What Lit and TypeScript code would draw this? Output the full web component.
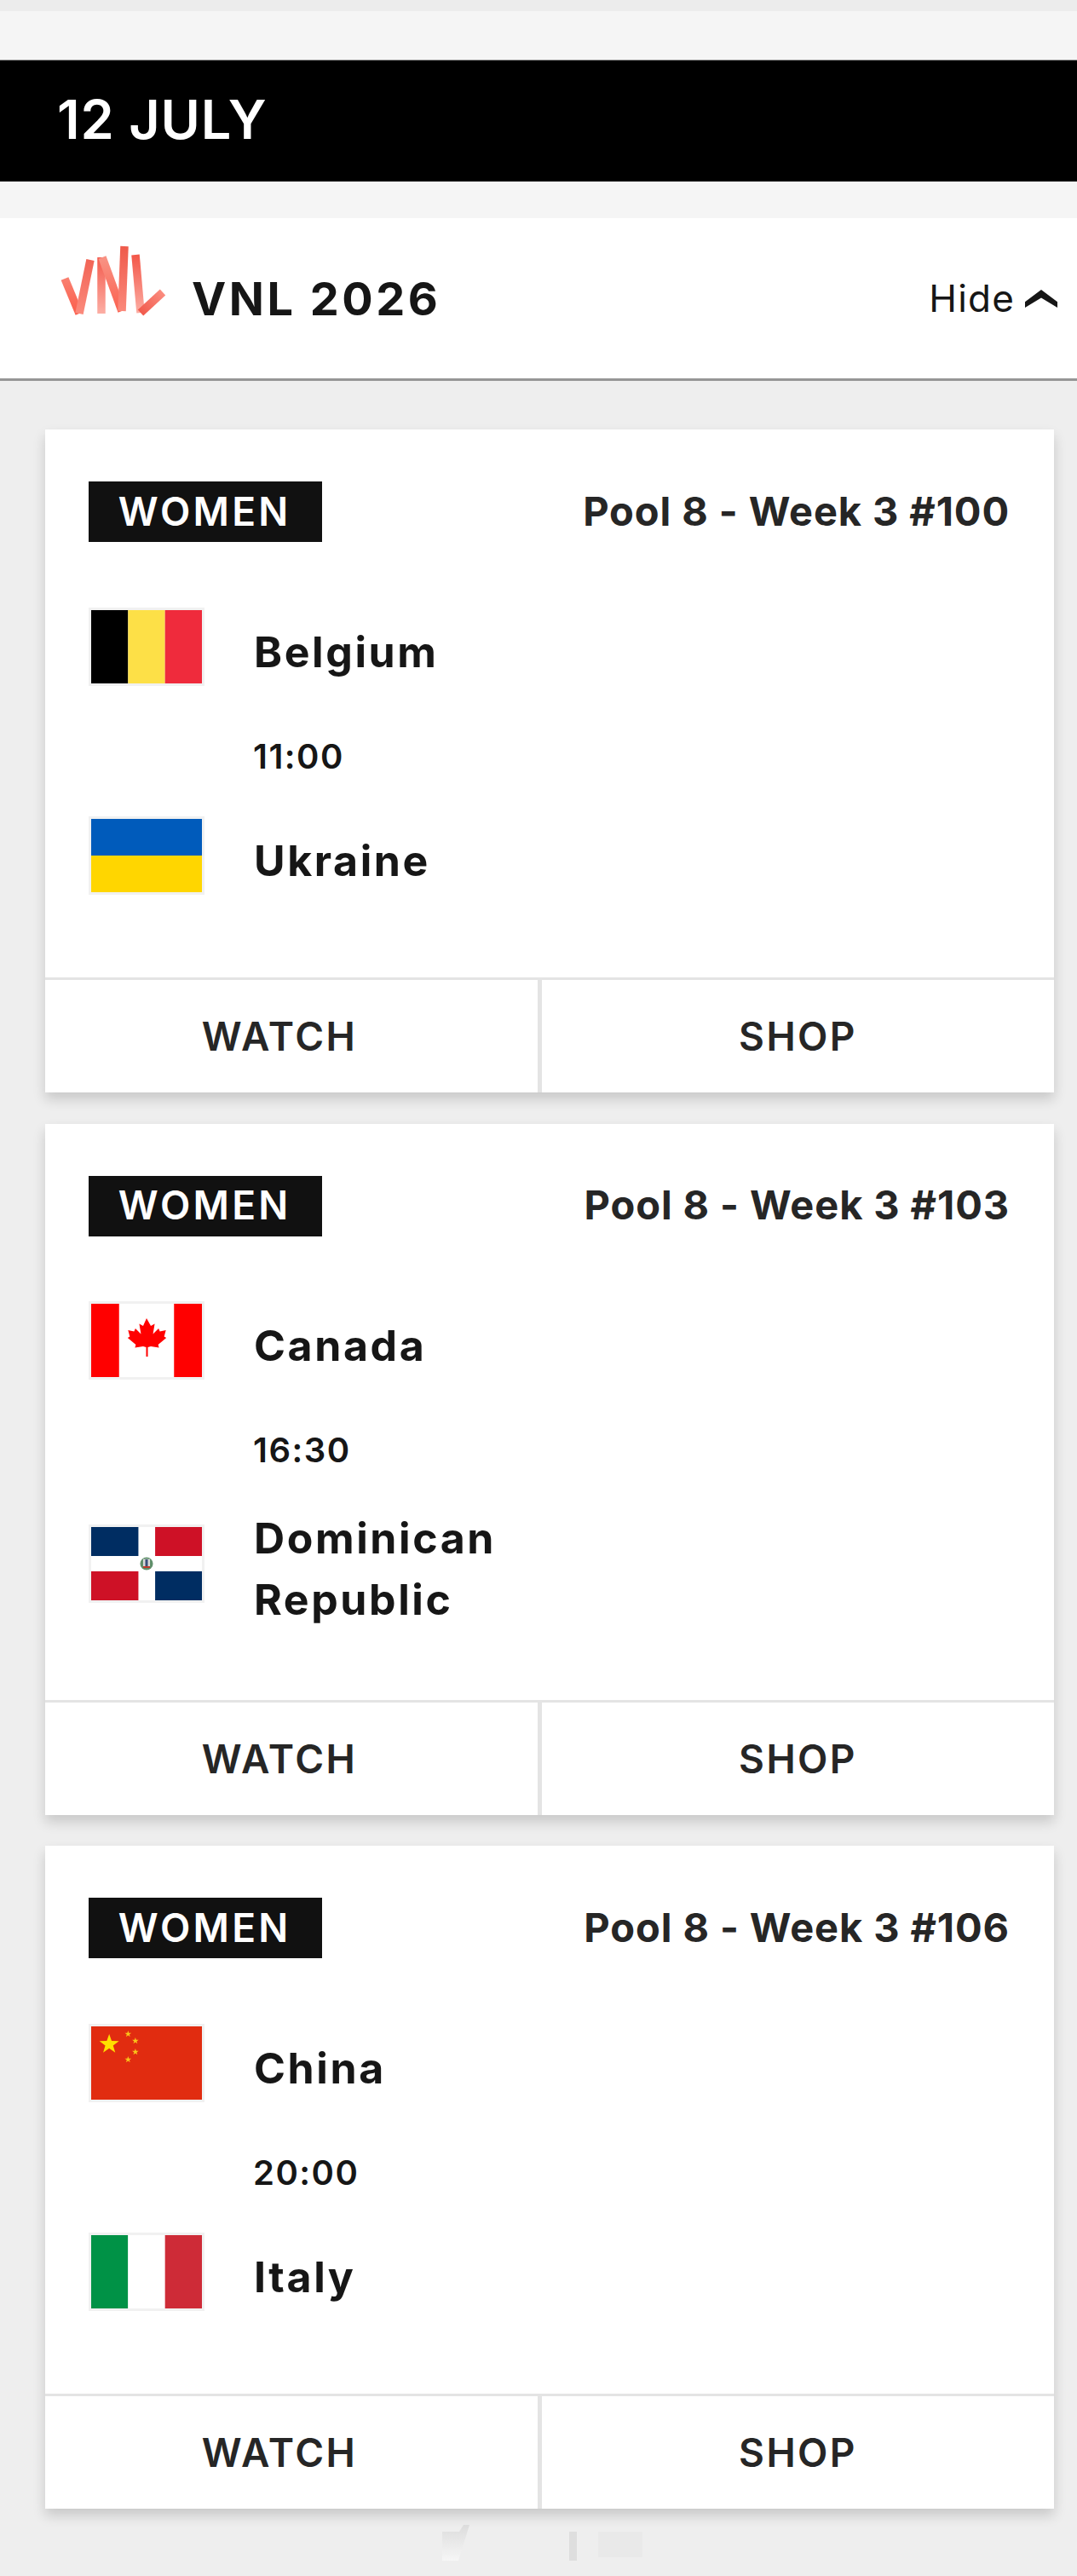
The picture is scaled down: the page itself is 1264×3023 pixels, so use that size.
import { LitElement, css, html, svg } from "lit";
import { customElement } from "lit/decorators.js";

interface Team {
  name: string[];
  flag: string;
}

interface Match {
  pool: string;
  time: string;
  home: Team;
  away: Team;
}

const star = (cx: number, cy: number, r: number, fill: string) => {
  const pts: string[] = [];
  for (let i = 0; i < 10; i++) {
    const rad = i % 2 ? r * 0.4 : r;
    const a = -Math.PI / 2 + (i * Math.PI) / 5;
    pts.push(`${(cx + rad * Math.cos(a)).toFixed(2)},${(cy + rad * Math.sin(a)).toFixed(2)}`);
  }
  return svg`<polygon points=${pts.join(" ")} fill=${fill}></polygon>`;
};

const flags: Record<string, unknown> = {
  be: svg`<rect width="43" height="86" fill="#000"></rect><rect x="43" width="43" height="86" fill="#fde047"></rect><rect x="86" width="43" height="86" fill="#ef2b3c"></rect>`,
  ua: svg`<rect width="129" height="43" fill="#005bbb"></rect><rect y="43" width="129" height="43" fill="#ffd600"></rect>`,
  ca: svg`<rect width="129" height="86" fill="#fff"></rect><rect width="32.5" height="86" fill="#ff0000"></rect><rect x="96.5" width="32.5" height="86" fill="#ff0000"></rect>
    <path fill="#f00" d="M64.500 17l5 9 4.500-2.500-2 12 6.500-6.500 1.500 3.500 7-1.500-2 7.500 2.500 1.500-9.500 8 1 3.500-9.500-1.500-3.500 1v11h-2v-11l-3.500-1-9.500 1.500 1-3.500-9.500-8 2.500-1.500-2-7.500 7 1.500 1.500-3.500 6.500 6.500-2-12 4.500 2.500z"></path>`,
  do: svg`<rect width="129" height="86" fill="#fff"></rect><rect width="55" height="34" fill="#002d62"></rect><rect x="74.500" width="54.500" height="34" fill="#ce1126"></rect><rect y="52" width="55" height="34" fill="#ce1126"></rect><rect x="74.500" y="52" width="54.500" height="34" fill="#002d62"></rect>
    <circle cx="64.500" cy="43" r="7.500" fill="#5f8f6a"></circle><rect x="60.500" y="37.500" width="8" height="9" fill="#d9d9d9"></rect><rect x="63" y="38" width="3" height="8" fill="#3a4f7a"></rect><rect x="60.500" y="46" width="8" height="2" fill="#c0392b"></rect>`,
  cn: svg`<rect width="129" height="86" fill="#e12c10"></rect>${star(21, 21, 12, "#ffdf00")}${star(43, 9, 4, "#f9c41a")}${star(51.500, 17, 4, "#f9c41a")}${star(51.500, 30, 4, "#f9c41a")}${star(43, 39, 4, "#f9c41a")}`,
  it: svg`<rect width="43" height="86" fill="#009246"></rect><rect x="43" width="43" height="86" fill="#fff"></rect><rect x="86" width="43" height="86" fill="#ce2b37"></rect>`,
};

const matches: Match[] = [
  {
    pool: "Pool 8 - Week 3 #100",
    time: "11:00",
    home: { name: ["Belgium"], flag: "be" },
    away: { name: ["Ukraine"], flag: "ua" },
  },
  {
    pool: "Pool 8 - Week 3 #103",
    time: "16:30",
    home: { name: ["Canada"], flag: "ca" },
    away: { name: ["Dominican", "Republic"], flag: "do" },
  },
  {
    pool: "Pool 8 - Week 3 #106",
    time: "20:00",
    home: { name: ["China"], flag: "cn" },
    away: { name: ["Italy"], flag: "it" },
  },
];

@customElement("app-root")
export class AppRoot extends LitElement {
  static styles = css`
    :host {
      display: block;
      width: 1264px;
      height: 3023px;
      overflow: hidden;
      background: #eeeeee;
      font-family: Inter, "Liberation Sans", sans-serif;
      color: #161616;
    }
    .top-strip {
      height: 13px;
      background: #ececec;
    }
    .date-wrap {
      background: #f5f5f5;
      padding: 57px 0 43px;
    }
    .date {
      height: 143px;
      box-sizing: border-box;
      border-top: 1px solid #8a8a8a;
      background: #000;
      color: #fff;
      font-size: 63px;
      font-weight: 600;
      line-height: 139px;
      padding-left: 67px;
      letter-spacing: 0.8px;
    }
    .league {
      height: 191px;
      box-sizing: border-box;
      background: #fff;
      border-bottom: 3px solid #969696;
      display: flex;
      align-items: center;
      padding: 0 23px 0 68px;
    }
    .logo {
      width: 132px;
      height: 90px;
      margin-bottom: 42px;
      flex: none;
    }
    .league-name {
      margin-left: 25px;
      font-size: 54px;
      font-weight: 700;
      letter-spacing: 3.500px;
      flex: 1;
    }
    .toggle {
      display: flex;
      align-items: center;
      gap: 12px;
      font-size: 44px;
      font-weight: 400;
      letter-spacing: 1.200px;
    }
    .chevron {
      width: 38px;
      height: 21px;
    }
    .cards {
      display: flex;
      flex-direction: column;
      gap: 36.500px;
      padding: 57px 27px 0 53px;
    }
    .card {
      background: #fff;
      box-shadow: 0 8px 14px rgba(0, 0, 0, 0.16);
    }
    .card-head {
      display: flex;
      justify-content: space-between;
      align-items: center;
      padding: 61px 52px 0 51px;
    }
    .badge {
      background: #111;
      color: #fff;
      width: 274px;
      height: 71px;
      box-sizing: border-box;
      padding: 0 2px 2px 0;
      display: flex;
      align-items: center;
      justify-content: center;
      font-size: 46px;
      font-weight: 600;
      letter-spacing: 3.200px;
    }
    .pool {
      font-size: 47px;
      font-weight: 700;
      color: #262626;
      letter-spacing: 0.9px;
      padding-bottom: 3px;
    }
    .teams {
      padding: 75px 51px 84px;
    }
    .team {
      display: flex;
      align-items: center;
      min-height: 107px;
    }
    .flag {
      width: 130px;
      height: 86px;
      flex: none;
      display: block;
      border: 3px solid #f1f1f1;
      margin-bottom: 12px;
    }
    .name {
      margin-left: 58px;
      margin-block: -2px;
      font-size: 50px;
      font-weight: 700;
      line-height: 72px;
      letter-spacing: 2.600px;
    }
    .time {
      height: 138px;
      display: flex;
      align-items: center;
      padding-left: 193px;
      font-size: 40px;
      font-weight: 600;
      letter-spacing: 1.500px;
    }
    .actions {
      display: flex;
      height: 135px;
      box-sizing: border-box;
      border-top: 3px solid #e4e4e4;
    }
    .action {
      display: flex;
      align-items: center;
      justify-content: center;
      font-size: 46px;
      font-weight: 600;
      letter-spacing: 2.400px;
      color: #262626;
    }
    .watch {
      width: 583px;
      padding-right: 28px;
      box-sizing: border-box;
      border-right: 5px solid #e4e4e4;
    }
    .shop {
      flex: 1;
    }
    .ghost {
      display: block;
      width: 1264px;
      height: 78px;
    }
  `;

  renderFlag(code: string) {
    return html`<svg class="flag" viewBox="0 0 129 86" preserveAspectRatio="none">${flags[code]}</svg>`;
  }

  renderTeam(team: Team) {
    return html`
      <div class="team">
        ${this.renderFlag(team.flag)}
        <div class="name">${team.name.map((line) => html`<div>${line}</div>`)}</div>
      </div>
    `;
  }

  renderCard(match: Match) {
    return html`
      <div class="card">
        <div class="card-head">
          <div class="badge">WOMEN</div>
          <div class="pool">${match.pool}</div>
        </div>
        <div class="teams">
          ${this.renderTeam(match.home)}
          <div class="time">${match.time}</div>
          ${this.renderTeam(match.away)}
        </div>
        <div class="actions">
          <div class="action watch">WATCH</div>
          <div class="action shop">SHOP</div>
        </div>
      </div>
    `;
  }

  render() {
    return html`
      <div class="top-strip"></div>
      <div class="date-wrap"><div class="date">12 JULY</div></div>
      <div class="league">
        <svg class="logo" viewBox="66 284 132 90" fill="none" stroke-width="9.500">
          <defs>
            <linearGradient id="a" gradientUnits="userSpaceOnUse" x1="0" y1="295" x2="0" y2="368">
              <stop offset="0" stop-color="#f8988a"></stop>
              <stop offset="1" stop-color="#fb5f4d"></stop>
            </linearGradient>
            <linearGradient id="b" gradientUnits="userSpaceOnUse" x1="0" y1="290" x2="0" y2="368">
              <stop offset="0" stop-color="#ef5b4c"></stop>
              <stop offset="1" stop-color="#fb8a7c"></stop>
            </linearGradient>
            <linearGradient id="c" gradientUnits="userSpaceOnUse" x1="0" y1="300" x2="0" y2="368">
              <stop offset="0" stop-color="#f3584a"></stop>
              <stop offset="1" stop-color="#fcaea4"></stop>
            </linearGradient>
            <linearGradient id="d" gradientUnits="userSpaceOnUse" x1="163" y1="367" x2="191" y2="342">
              <stop offset="0" stop-color="#f15a4c"></stop>
              <stop offset="1" stop-color="#fb8f82"></stop>
            </linearGradient>
          </defs>
          <path d="M74 327 L91 368" stroke="url(#a)"></path>
          <path d="M91 368 L104 305" stroke="url(#b)"></path>
          <path d="M117 302 L117 368" stroke="url(#c)"></path>
          <path d="M118 302 L141 365" stroke="url(#a)"></path>
          <path d="M141 365 L144 289" stroke="url(#b)"></path>
          <path d="M157 299 L163 367" stroke="url(#c)"></path>
          <path d="M163 367 L189 343" stroke="url(#d)"></path>
        </svg>
        <div class="league-name">VNL 2026</div>
        <div class="toggle">
          Hide
          <svg class="chevron" viewBox="0 0 40 22">
            <path d="M0 15 L20 0 L40 15 L40 22 L20 10 L0 22 Z" fill="#161616"></path>
          </svg>
        </div>
      </div>
      <div class="cards">${matches.map((m) => this.renderCard(m))}</div>
      <svg class="ghost" viewBox="0 0 1264 78">
        <defs>
          <linearGradient id="g" x1="0" y1="0" x2="0" y2="1">
            <stop offset="0" stop-color="#dcdcdc"></stop>
            <stop offset="1" stop-color="#f6f6f6"></stop>
          </linearGradient>
        </defs>
        <path d="M519 27 L539 27 L544 19 L551 19 L538 61 L519 61 Z" fill="url(#g)"></path>
        <rect x="668" y="27" width="9" height="34" fill="#dedede"></rect>
        <rect x="702" y="27" width="52" height="30" fill="#e9e9e9"></rect>
      </svg>
    `;
  }
}
